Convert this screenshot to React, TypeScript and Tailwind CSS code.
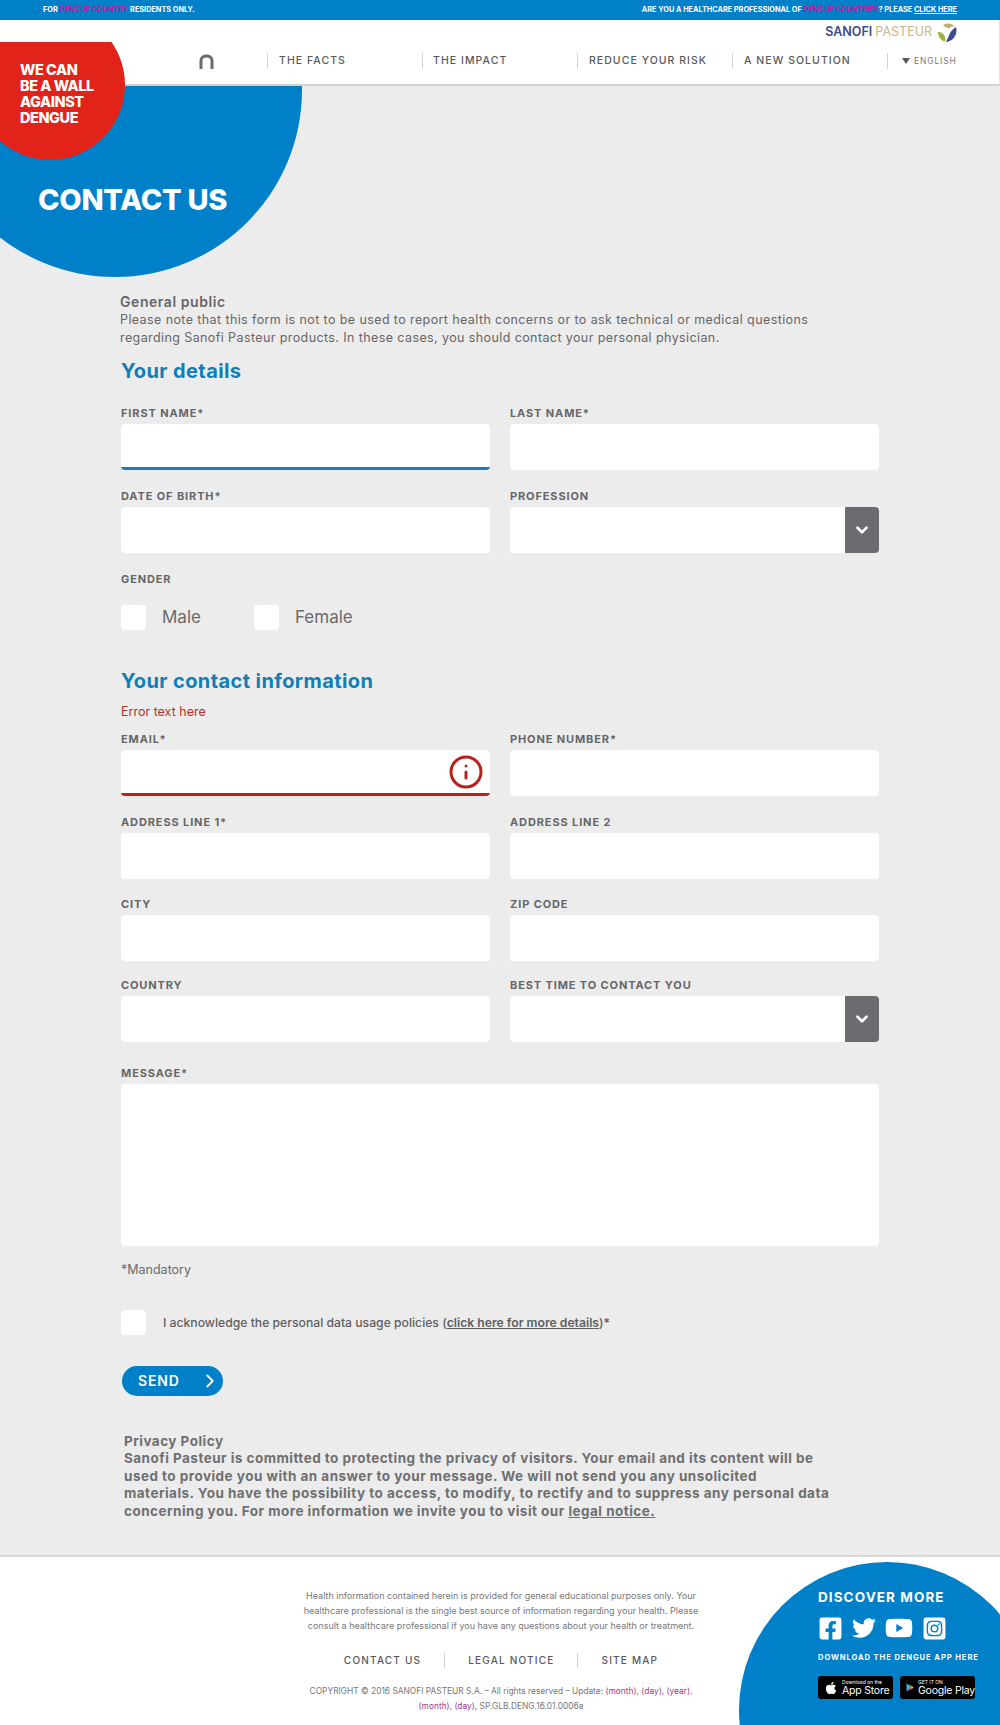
import type { ReactNode } from "react";
import { ChevronDown, ChevronRight, Info } from "lucide-react";
import { FaApple, FaFacebookSquare, FaTwitter, FaYoutube, FaInstagramSquare } from "react-icons/fa";

const labelClass = "block h-4 mb-1 pt-px text-[11px] leading-4 font-bold tracking-[0.08em] text-[#666668] uppercase";

function Field({
  label,
  focus,
  error,
  select,
  className,
}: {
  label: string;
  focus?: boolean;
  error?: boolean;
  select?: boolean;
  className?: string;
}) {
  return (
    <div className={className}>
      <label className={labelClass}>{label}</label>
      <div className="relative h-[46px] bg-white rounded-[4px] overflow-hidden">
        {focus && <div className="absolute inset-x-0 bottom-0 h-[3px] bg-[#1f7ab5]" />}
        {error && <div className="absolute inset-x-0 bottom-0 h-[3px] bg-[#b8221d]" />}
        {error && (
          <Info size={36} strokeWidth={2} className="absolute right-[6px] top-[4px] text-[#b8221d]" />
        )}
        {select && (
          <div className="absolute right-0 inset-y-0 w-[34px] flex items-center justify-center bg-[#6c6c70]">
            <ChevronDown size={18} strokeWidth={3.5} className="text-white" />
          </div>
        )}
      </div>
    </div>
  );
}

function Box() {
  return <div className="w-[25px] h-[25px] bg-white rounded-[4px] shrink-0" />;
}

function NavItem({ children }: { children: ReactNode }) {
  return (
    <div className="w-[155px] h-4 pl-[11px] flex items-center border-l border-[#d5d5d5] text-[10.500px] font-medium tracking-[0.1em] text-[#58585a]">
      {children}
    </div>
  );
}

function Bird() {
  return (
    <svg width="20" height="19" viewBox="0 0 20 19">
      <path d="M6 2c3-2.500 9-2 12 1.500-2.500-.5-4.500.2-6 2C10 4.500 7.500 4 6 2z" fill="#c7a874" />
      <path d="M1 9c3 0 6 1.500 7 5 .4 1.500.4 3 .2 4.500C4 18 1 14 1 9z" fill="#9fb13c" />
      <path d="M19 4c1.500 5-.5 12-6.500 14-1.500.7-3 .9-3.500.8 2-3 2.500-6 4.500-9.500 1.200-2 3.500-4 5.500-5.300z" fill="#3f4a90" />
    </svg>
  );
}

function Badge({ icon, small, big }: { icon: ReactNode; small: string; big: string }) {
  return (
    <div className="w-[75px] h-[23px] bg-black rounded-[3px] flex items-center gap-1 pl-[6px] text-white">
      {icon}
      <div className="flex flex-col">
        <span className="text-[5px] leading-[6px]">{small}</span>
        <span className="text-[10.500px] leading-[11px] tracking-[-0.02em] whitespace-nowrap">{big}</span>
      </div>
    </div>
  );
}

function PlayIcon() {
  return (
    <svg width="14" height="15" viewBox="0 0 14 15">
      <path d="M1 0.500v14l7-7z" fill="#4bb8e8" />
      <path d="M1 0.500l7 7 2.500-2.500z" fill="#53b96a" />
      <path d="M1 14.500l7-7 2.500 2.500z" fill="#e0453a" />
      <path d="M10.500 5l3 2.500-3 2.500-2.500-2.500z" fill="#f4c22e" />
    </svg>
  );
}

export default function App() {
  return (
    <div
      className="relative w-[1000px] h-[1725px] overflow-hidden bg-[#ececec] flex flex-col"
      style={{ fontFamily: '"Inter", "Liberation Sans", sans-serif' }}
    >
      {/* Top bar */}
      <div className="relative z-20 h-5 shrink-0 bg-[#0080c8] flex items-center justify-between pl-[43px] pr-[43px] text-[7.300px] font-bold text-white">
        <span>
          FOR <span className="text-[#c6189f]">DENGUE COUNTRY</span> RESIDENTS ONLY.
        </span>
        <span>
          ARE YOU A HEALTHCARE PROFESSIONAL OF <span className="text-[#c6189f]">DENGUE COUNTRIES</span>? PLEASE{" "}
          <span className="underline">CLICK HERE</span>
        </span>
      </div>

      {/* Header */}
      <div className="relative z-10 h-[66px] shrink-0 bg-white border-b-2 border-[#d2d2d2] border-r border-r-[#e2e2e2]">
        <div className="h-[24px] pr-[42px] flex items-center justify-end gap-[5px]">
          <span className="text-[12.500px] font-semibold text-[#3e4a8c]">
            SANOFI <span className="font-normal text-[#c9b58c]">PASTEUR</span>
          </span>
          <Bird />
        </div>
        <div className="mt-[9px] flex items-center">
          <div className="w-[267px] pl-[199px]">
            <svg width="15" height="15" viewBox="0 0 15 15" fill="none">
              <path d="M2 15V6.500C2 3.500 4.500 2 7.500 2S13 3.500 13 6.500V15" stroke="#6b6b6d" strokeWidth="3" />
            </svg>
          </div>
          <NavItem>THE FACTS</NavItem>
          <NavItem>
            <span className="-ml-px">THE IMPACT</span>
          </NavItem>
          <NavItem>REDUCE YOUR RISK</NavItem>
          <NavItem>A NEW SOLUTION</NavItem>
          <div className="h-4 pl-[14px] flex items-center gap-1 border-l border-[#d5d5d5] text-[8.500px] tracking-[0.1em] text-[#77777a]">
            <span className="w-0 h-0 border-x-[4px] border-x-transparent border-t-[6px] border-t-[#58585a]" />
            ENGLISH
          </div>
        </div>
      </div>

      {/* Circles */}
      <div className="absolute left-[-72px] top-[-97px] w-[374px] h-[374px] rounded-full bg-[#0080c8]" />
      <div className="absolute z-20 left-0 top-[42px] w-[130px] h-[120px] overflow-hidden">
        <div className="absolute left-[-25px] top-[-32px] w-[150px] h-[150px] rounded-full bg-[#e2231a]" />
        <div className="relative pl-[20px] pt-[20px] text-[14.500px] leading-4 font-extrabold tracking-[-0.03em] text-white">
          WE CAN
          <br />
          BE A WALL
          <br />
          AGAINST
          <br />
          DENGUE
        </div>
      </div>

      <main className="relative flex-1 flex flex-col">
        <h1 className="pl-[38px] pt-[95px] h-[207px] text-[29px] leading-[38px] font-extrabold tracking-[-0.01em] text-white">
          CONTACT US
        </h1>

        <div className="pl-[120px] text-[#666668]">
          <p className="text-[14px] leading-[18px] font-semibold tracking-[0.04em]">General public</p>
          <p className="text-[12.500px] leading-[17.500px] tracking-[0.032em]">
            Please note that this form is not to be used to report health concerns or to ask technical or medical questions
            <br />
            regarding Sanofi Pasteur products. In these cases, you should contact your personal physician.
          </p>
        </div>

        <form className="ml-[121px] w-[758px]">
          <h2 className="mt-[11px] mb-[19px] text-[20px] leading-[28px] font-bold tracking-[0.02em] text-[#0f7fb8]">
            Your details
          </h2>
          <div className="grid grid-cols-2 gap-x-5 gap-y-[17px]">
            <Field label="First name*" focus />
            <Field label="Last name*" />
            <Field label="Date of birth*" />
            <Field label="Profession" select />
          </div>

          <div className="mt-[17px]">
            <p className={labelClass}>Gender</p>
            <div className="mt-[19px] flex items-center text-[#6a6a6c] text-[17px]">
              <Box />
              <span className="ml-4 w-[92px]">Male</span>
              <Box />
              <span className="ml-4">Female</span>
            </div>
          </div>

          <h2 className="mt-[36px] text-[20px] leading-[28px] font-bold tracking-[0.02em] text-[#0f7fb8]">
            Your contact information
          </h2>
          <p className="mt-[9px] mb-[10px] text-[12.500px] leading-4 text-[#b5322c]">Error text here</p>
          <div className="grid grid-cols-2 gap-x-5 gap-y-[17px]">
            <Field label="Email*" error />
            <Field label="Phone number*" />
            <Field label="Address line 1*" />
            <Field label="Address line 2" />
            <Field label="City" className="-mt-px" />
            <Field label="Zip code" className="-mt-px" />
            <Field label="Country" className="-mt-[2px]" />
            <Field label="Best time to contact you" select className="-mt-[2px]" />
          </div>

          <div className="mt-[22px]">
            <label className={labelClass}>Message*</label>
            <div className="h-[162px] bg-white rounded-[4px]" />
          </div>
          <p className="mt-4 text-[12.500px] leading-4 text-[#6a6a6c]">*Mandatory</p>

          <div className="mt-[32px] flex items-center">
            <Box />
            <span className="ml-[17px] pt-[3px] text-[12.200px] font-medium text-[#5f5f61]">
              I acknowledge the personal data usage policies (
              <span className="underline font-semibold">click here for more details</span>)*
            </span>
          </div>

          <button
            type="button"
            className="mt-[31px] ml-px w-[101px] h-[30px] rounded-full bg-[#0080c8] flex items-center pl-[16px] gap-[19px] text-[14px] font-semibold tracking-[0.06em] text-white"
          >
            SEND
            <ChevronRight size={22} strokeWidth={2} />
          </button>

          <div className="mt-[37px] ml-[3px] text-[13.500px] leading-[17.500px] font-bold tracking-[0.035em] text-[#6f6f71] whitespace-nowrap">
            <p>Privacy Policy</p>
            <p>
              Sanofi Pasteur is committed to protecting the privacy of visitors. Your email and its content will be
              <br />
              used to provide you with an answer to your message. We will not send you any unsolicited
              <br />
              materials. You have the possibility to access, to modify, to rectify and to suppress any personal data
              <br />
              concerning you. For more information we invite you to visit our <span className="underline">legal notice.</span>
            </p>
          </div>
        </form>
      </main>

      {/* Footer */}
      <footer className="relative h-[170px] shrink-0 bg-white border-t-2 border-[#d8d8d8] overflow-hidden">
        <div className="ml-[291px] w-[420px] pt-[31px] text-center text-[#77777a]">
          <p className="text-[9px] leading-[15px]">
            Health information contained herein is provided for general educational purposes only. Your
            <br />
            healthcare professional is the single best source of information regarding your health. Please
            <br />
            consult a healthcare professional if you have any questions about your health or treatment.
          </p>
          <div className="mt-[20px] flex justify-center items-center text-[10px] font-medium tracking-[0.12em] text-[#58585a]">
            <span className="pr-[23px]">CONTACT US</span>
            <span className="px-[23px] border-l border-[#cfcfcf]">LEGAL NOTICE</span>
            <span className="pl-[23px] border-l border-[#cfcfcf]">SITE MAP</span>
          </div>
          <p className="mt-[16px] text-[8.400px] leading-[15px]">
            COPYRIGHT © 2016 SANOFI PASTEUR S.A. – All rights reserved – Update:{" "}
            <span className="text-[#9c3b83]">(month), (day), (year).</span>
            <br />
            <span className="text-[#9c3b83]">(month), (day),</span> SP.GLB.DENG.16.01.0006a
          </p>
        </div>

        <div className="absolute left-[739px] top-[5px] w-[296px] h-[296px] rounded-full bg-[#0080c8]" />
        <div className="absolute left-[818px] top-[31px] text-white">
          <p className="text-[13.500px] leading-[18px] font-bold tracking-[0.08em]">DISCOVER MORE</p>
          <div className="mt-[8px] flex items-center gap-[9px]">
            <FaFacebookSquare size={25} />
            <FaTwitter size={24} />
            <FaYoutube size={28} />
            <FaInstagramSquare size={25} />
          </div>
          <p className="mt-[10px] text-[7.600px] leading-[12px] font-bold tracking-[0.12em] whitespace-nowrap">
            DOWNLOAD THE DENGUE APP HERE
          </p>
          <div className="mt-[12px] flex gap-[7px]">
            <Badge icon={<FaApple size={14} />} small="Download on the" big="App Store" />
            <Badge icon={<PlayIcon />} small="GET IT ON" big="Google Play" />
          </div>
        </div>
      </footer>
    </div>
  );
}
